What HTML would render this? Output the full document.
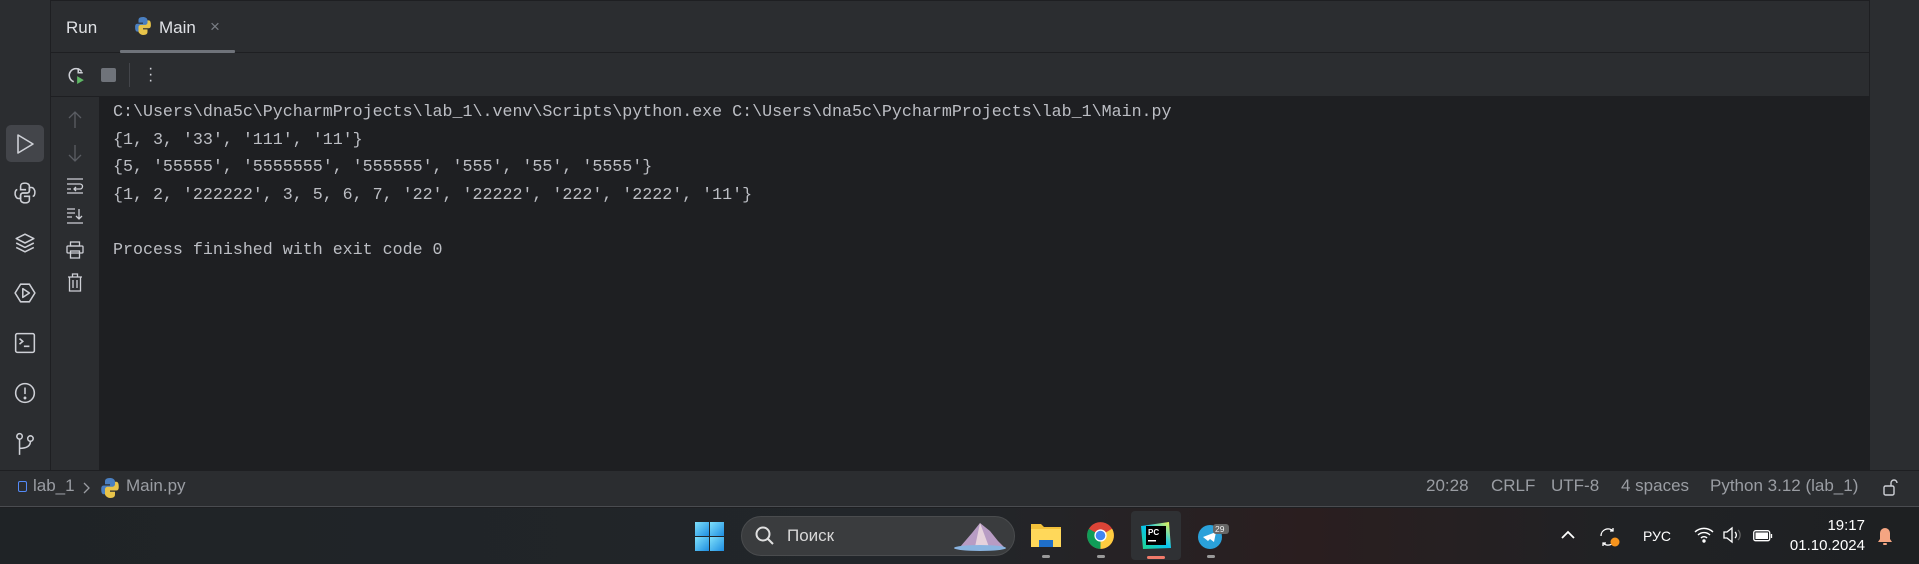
<!DOCTYPE html>
<html><head><meta charset="utf-8"><style>
*{margin:0;padding:0;box-sizing:border-box}
body{width:1919px;height:564px;overflow:hidden;background:#1e1f22;font-family:"Liberation Sans",sans-serif;position:relative}
.a{position:absolute}
.mono{font-family:"Liberation Mono",monospace;font-size:16.65px;color:#bcbec4;white-space:pre}
svg{position:absolute;overflow:visible}
.st{color:#9a9da3;font-size:17px;top:476px}
</style></head><body>
<div class="a" style="left:0;top:0;width:1919px;height:470px;background:#2b2d30"></div>
<div class="a" style="left:50px;top:0;width:1px;height:470px;background:#1e1f22"></div>
<div class="a" style="left:51px;top:0;width:1818px;height:1px;background:#1e1f22"></div>
<div class="a" style="left:1869px;top:0;width:1px;height:470px;background:#1e1f22"></div>
<div class="a" style="left:51px;top:52px;width:1818px;height:1px;background:#1e1f22"></div>
<div class="a" style="left:51px;top:96px;width:1818px;height:1px;background:#1e1f22"></div>
<div class="a" style="left:99px;top:97px;width:1770px;height:373px;background:#1e1f22"></div>
<!-- tabs -->
<div class="a" style="left:66px;top:18px;color:#dfe1e5;font-size:17px">Run</div>
<svg style="left:135px;top:17px" width="16" height="18" viewBox="0 0 14 16"><path d="M7 0C3 0 3 2 3 3v2h4v1H2C0 6 0 8 0 9s0 4 2 4h1v-2c0-1 1-2 2-2h4c1 0 2-1 2-2V3C11 1 9 0 7 0z" fill="#4a7fc1"/><path d="M7 16c4 0 4-2 4-3v-2H7v-1h5c2 0 2-2 2-3s0-4-2-4h-1v2c0 1-1 2-2 2H5c-1 0-2 1-2 2v4c0 1 2 3 4 3z" fill="#e8c44a"/></svg>
<div class="a" style="left:159px;top:18px;color:#dfe1e5;font-size:17px">Main</div>
<div class="a" style="left:210px;top:17px;color:#7a7e85;font-size:17px">×</div>
<div class="a" style="left:120px;top:50px;width:115px;height:3px;background:#6f737a;border-radius:1px"></div>
<!-- toolbar -->
<svg style="left:67px;top:66px" width="18" height="18" viewBox="0 0 16 16"><path d="M13 5A6 6 0 1 0 6 14" fill="none" stroke="#ced0d6" stroke-width="1.4"/><path d="M10 2v4h4" fill="none" stroke="#ced0d6" stroke-width="1.4"/><path d="M9 9l6 3.5-6 3.5z" fill="#5fb865"/></svg>
<div class="a" style="left:101px;top:68px;width:15px;height:14px;background:#6f737a;border-radius:2px"></div>
<div class="a" style="left:129px;top:63px;width:1px;height:24px;background:#43454a"></div>
<div class="a" style="left:148px;top:66px;color:#ced0d6;font-size:16px;line-height:6px;width:4px;text-align:center">·<br>·<br>·</div>
<!-- left bar -->
<div class="a" style="left:6px;top:125px;width:38px;height:37px;background:#43454a;border-radius:5px"></div>
<svg style="left:16px;top:134px" width="18" height="20"><path d="M2 1l15 9-15 9z" fill="none" stroke="#ced0d6" stroke-width="1.6" stroke-linejoin="round"/></svg>
<svg style="left:14px;top:182px" width="22" height="22" viewBox="0 0 20 20" fill="none" stroke="#ced0d6" stroke-width="1.4"><path d="M10 1C6 1 6 3 6 4v3h5M3 7C1 7 1 10 1 11s1 4 3 4h2v-3c0-1 1-2 2-2h4c1 0 2-1 2-2V4c0-2-2-3-4-3"/><path d="M10 19c4 0 4-2 4-3v-3H9M17 13c2 0 2-3 2-4s-1-4-3-4h-2v3c0 1-1 2-2 2H8c-1 0-2 1-2 2v4c0 2 2 3 4 3"/></svg>
<svg style="left:14px;top:232px" width="22" height="22" viewBox="0 0 20 20" fill="none" stroke="#ced0d6" stroke-width="1.4" stroke-linejoin="round"><path d="M10 2l8 4-8 4-8-4z"/><path d="M2 10l8 4 8-4M2 14l8 4 8-4"/></svg>
<svg style="left:14px;top:282px" width="22" height="22" viewBox="0 0 20 20" fill="none" stroke="#ced0d6" stroke-width="1.4" stroke-linejoin="round"><path d="M6 2h8l5 8-5 8H6l-5-8z"/><path d="M8 6l6 4-6 4z"/></svg>
<svg style="left:14px;top:332px" width="22" height="22" viewBox="0 0 20 20" fill="none" stroke="#ced0d6" stroke-width="1.4"><rect x="1.5" y="1.5" width="17" height="17" rx="1.5"/><path d="M5 6l3 2.5L5 11M9 13h5"/></svg>
<svg style="left:14px;top:382px" width="22" height="22" viewBox="0 0 20 20" fill="none" stroke="#ced0d6" stroke-width="1.4"><circle cx="10" cy="10" r="8.5"/><path d="M10 5v6"/><circle cx="10" cy="14.5" r=".6" fill="#ced0d6"/></svg>
<svg style="left:14px;top:432px" width="22" height="24" viewBox="0 0 20 22" fill="none" stroke="#ced0d6" stroke-width="1.4"><circle cx="5" cy="4" r="2.5"/><circle cx="15" cy="6" r="2.5"/><path d="M5 6.5V21M5 15c6 0 10-2 10-6.5"/></svg>
<!-- gutter icons -->
<svg style="left:68px;top:111px" width="14" height="18" fill="none" stroke="#5a5d63" stroke-width="1.3"><path d="M7 17V1M1 7l6-6 6 6"/></svg>
<svg style="left:68px;top:144px" width="14" height="18" fill="none" stroke="#5a5d63" stroke-width="1.3"><path d="M7 1v16M1 11l6 6 6-6"/></svg>
<svg style="left:66px;top:177px" width="18" height="18" fill="none" stroke="#ced0d6" stroke-width="1.3"><path d="M1 2h16M1 7h13a2.5 2.5 0 0 1 0 5H8M10 10l-2 2 2 2M1 12h4M1 16h16"/></svg>
<svg style="left:66px;top:207px" width="18" height="18" fill="none" stroke="#ced0d6" stroke-width="1.3"><path d="M1 2h8M1 6h8M1 10h5M13 2v10M10 9l3 3 3-3M1 16h16"/></svg>
<svg style="left:66px;top:241px" width="18" height="18" fill="none" stroke="#ced0d6" stroke-width="1.3"><rect x="4.5" y="1" width="9" height="4"/><rect x="1" y="5" width="16" height="7" rx="1"/><rect x="4.5" y="10" width="9" height="7"/></svg>
<svg style="left:67px;top:273px" width="16" height="19" fill="none" stroke="#ced0d6" stroke-width="1.3"><path d="M1 4h14M5.5 4V1h5v3M2.5 4v14h11V4M6 7v8M10 7v8"/></svg>
<!-- console -->
<div class="a mono" style="left:113px;top:98px;line-height:27.5px">C:\Users\dna5c\PycharmProjects\lab_1\.venv\Scripts\python.exe C:\Users\dna5c\PycharmProjects\lab_1\Main.py
{1, 3, '33', '111', '11'}
{5, '55555', '5555555', '555555', '555', '55', '5555'}
{1, 2, '222222', 3, 5, 6, 7, '22', '22222', '222', '2222', '11'}

Process finished with exit code 0</div>
<!-- status bar -->
<div class="a" style="left:0;top:470px;width:1919px;height:37px;background:#2b2d30;border-top:1px solid #1e1f22;border-bottom:1px solid #4a4c50"></div>
<div class="a" style="left:18px;top:481px;width:9px;height:11px;border:1.5px solid #548af7;border-radius:2px"></div>
<div class="a st" style="left:33px">lab_1</div>
<svg style="left:82px;top:482px" width="8" height="12" fill="none" stroke="#9a9da3" stroke-width="1.3"><path d="M2 1l5 5-5 5"/></svg>
<svg style="left:101px;top:478px" width="18" height="20" viewBox="0 0 14 16"><path d="M7 0C3 0 3 2 3 3v2h4v1H2C0 6 0 8 0 9s0 4 2 4h1v-2c0-1 1-2 2-2h4c1 0 2-1 2-2V3C11 1 9 0 7 0z" fill="#4a7fc1"/><path d="M7 16c4 0 4-2 4-3v-2H7v-1h5c2 0 2-2 2-3s0-4-2-4h-1v2c0 1-1 2-2 2H5c-1 0-2 1-2 2v4c0 1 2 3 4 3z" fill="#e8c44a"/></svg>
<div class="a st" style="left:126px">Main.py</div>
<div class="a st" style="left:1426px">20:28</div>
<div class="a st" style="left:1491px">CRLF</div>
<div class="a st" style="left:1551px">UTF-8</div>
<div class="a st" style="left:1621px">4 spaces</div>
<div class="a st" style="left:1710px">Python 3.12 (lab_1)</div>
<svg style="left:1883px;top:479px" width="16" height="17" fill="none" stroke="#ced0d6" stroke-width="1.4"><rect x="1" y="7" width="10" height="9" rx="1.5"/><path d="M8 7V4a3 3 0 0 1 6 0"/></svg>
<!-- taskbar -->
<div class="a" style="left:0;top:508px;width:1919px;height:56px;background:linear-gradient(90deg,#1f2326 0%,#22262a 50%,#2a1e1f 68%,#202225 85%,#1e2022 100%)"></div>
<svg style="left:695px;top:522px" width="29" height="29"><defs><linearGradient id="w" x1="0" y1="0" x2="1" y2="1"><stop offset="0" stop-color="#7ee0fb"/><stop offset="1" stop-color="#1e8de0"/></linearGradient></defs><rect x="0" y="0" width="14" height="14" fill="url(#w)"/><rect x="15" y="0" width="14" height="14" fill="url(#w)"/><rect x="0" y="15" width="14" height="14" fill="url(#w)"/><rect x="15" y="15" width="14" height="14" fill="url(#w)"/></svg>
<div class="a" style="left:741px;top:516px;width:274px;height:40px;background:#3a3c3e;border-radius:20px;border:1px solid #4a4c4e"></div>
<svg style="left:755px;top:526px" width="20" height="20" fill="none" stroke="#e0e0e0" stroke-width="2"><circle cx="8" cy="8" r="6.5"/><path d="M13 13l5 5"/></svg>
<div class="a" style="left:787px;top:526px;color:#d8d8d8;font-size:17px">Поиск</div>
<svg style="left:950px;top:521px" width="58" height="32"><path d="M10 26l12-14 8-10 10 8 8 10 6 6z" fill="#b89cc4"/><path d="M30 2l-5 24h14z" fill="#e6d2dc"/><ellipse cx="30" cy="27" rx="26" ry="3" fill="#8ab4e0"/></svg>
<svg style="left:1031px;top:522px" width="30" height="26"><path d="M0 2h10l3 3h17v20H0z" fill="#f3c13a"/><rect x="0" y="7" width="30" height="18" fill="#ffd85a"/><rect x="8" y="18" width="14" height="7" fill="#1f6fc9"/></svg>
<div class="a" style="left:1042px;top:555px;width:8px;height:3px;background:#999;border-radius:2px"></div>
<svg style="left:1086px;top:521px" width="29" height="29" viewBox="0 0 26 26"><circle cx="13" cy="13" r="12" fill="#db4437"/><path d="M13 13L2.6 7A12 12 0 0 0 13 25z" fill="#0f9d58"/><path d="M13 13L13 25A12 12 0 0 0 23.4 7z" fill="#ffcd40"/><circle cx="13" cy="13" r="5.5" fill="#fff"/><circle cx="13" cy="13" r="4.3" fill="#4285f4"/></svg>
<div class="a" style="left:1097px;top:555px;width:8px;height:3px;background:#999;border-radius:2px"></div>
<div class="a" style="left:1131px;top:511px;width:50px;height:49px;background:#2f3134;border-radius:4px"></div>
<svg style="left:1141px;top:522px" width="30" height="27"><defs><linearGradient id="p" x1="0" y1="1" x2="1" y2="0"><stop offset="0" stop-color="#21d789"/><stop offset=".5" stop-color="#07c3f2"/><stop offset="1" stop-color="#fcf84a"/></linearGradient></defs><path d="M0 4L28 0 30 26 2 27z" fill="url(#p)"/><rect x="5" y="4" width="20" height="19" fill="#000"/><text x="7" y="13" fill="#fff" font-family="Liberation Sans" font-weight="bold" font-size="8">PC</text><rect x="7" y="18" width="8" height="1.5" fill="#fff"/></svg>
<div class="a" style="left:1147px;top:556px;width:18px;height:3px;background:#f07a6a;border-radius:2px"></div>
<svg style="left:1197px;top:523px" width="34" height="26"><circle cx="13" cy="14" r="12" fill="#2aa1da"/><path d="M6 14l13-5-2 10-4-3-2 2z" fill="#fff"/><rect x="16" y="1" width="16" height="10" rx="3" fill="#666"/><text x="18" y="9" fill="#eee" font-family="Liberation Sans" font-size="8.5">29</text></svg>
<div class="a" style="left:1207px;top:555px;width:8px;height:3px;background:#999;border-radius:2px"></div>
<svg style="left:1561px;top:530px" width="14" height="10" fill="none" stroke="#fff" stroke-width="1.8"><path d="M1 8l6-6 6 6"/></svg>
<svg style="left:1598px;top:527px" width="22" height="20" fill="none" stroke="#fff" stroke-width="1.3"><path d="M3 9a7 7 0 0 1 12-5M17 11a7 7 0 0 1-12 5"/><path d="M15 1v3h-3M5 19v-3h3"/><circle cx="17" cy="15" r="4.5" fill="#f7941d" stroke="none"/></svg>
<div class="a" style="left:1643px;top:528px;color:#fff;font-size:14px">РУС</div>
<svg style="left:1694px;top:527px" width="20" height="16" fill="none" stroke="#fff" stroke-width="1.4"><path d="M1 5a13 13 0 0 1 18 0M4 8a8.5 8.5 0 0 1 12 0M7 11a4 4 0 0 1 6 0"/><circle cx="10" cy="14" r="1" fill="#fff"/></svg>
<svg style="left:1723px;top:527px" width="20" height="16" fill="none" stroke="#fff" stroke-width="1.3"><path d="M1 5h3l5-4v14l-5-4H1z"/><path d="M12 5a4 4 0 0 1 0 6"/><path d="M15 3a7 7 0 0 1 0 10" stroke="#666"/></svg>
<svg style="left:1753px;top:530px" width="20" height="12" fill="none" stroke="#fff" stroke-width="1.3"><rect x=".7" y=".7" width="16" height="10" rx="2"/><rect x="2.5" y="2.5" width="12.5" height="6.5" fill="#fff" stroke="none"/><path d="M18.5 4v4"/></svg>
<div class="a" style="left:1780px;top:516px;width:85px;text-align:right;color:#fff;font-size:15px;line-height:20px">19:17<br>01.10.2024</div>
<svg style="left:1877px;top:527px" width="16" height="19"><path d="M8 1a5 5 0 0 1 5 5v6l2 3H1l2-3V6a5 5 0 0 1 5-5z" fill="#f4a582"/><rect x="6" y="16" width="4" height="2" rx="1" fill="#f4a582"/></svg>
</body></html>
